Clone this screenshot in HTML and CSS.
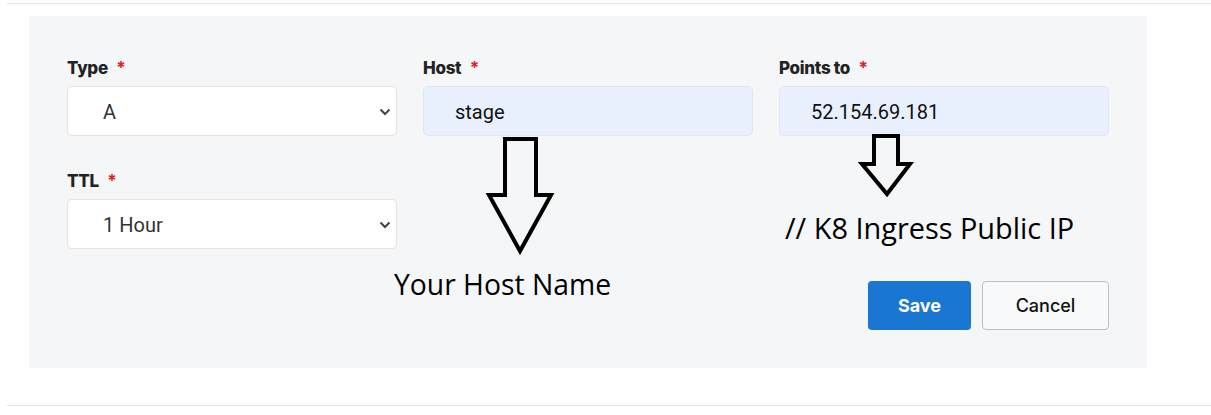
FILE: index.html
```html
<!DOCTYPE html>
<html>
<head>
<meta charset="utf-8">
<link rel="stylesheet" href="styles.css">
</head>
<body>
<div class="rule rule-top"></div>
<div class="panel">
  <div class="grid">
    <div class="field">
      <div class="label">Type <span class="req">*</span></div>
      <div class="select"><span>A</span>
        <svg class="chev" width="12" height="8" viewBox="0 0 12 8"><path d="M1.5 1.5 L6 6 L10.5 1.5" fill="none" stroke="#444" stroke-width="2"/></svg>
      </div>
    </div>
    <div class="field">
      <div class="label">Host <span class="req">*</span></div>
      <div class="input">stage</div>
    </div>
    <div class="field">
      <div class="label">Points to <span class="req">*</span></div>
      <div class="input">52.154.69.181</div>
    </div>
    <div class="field row2">
      <div class="label">TTL <span class="req">*</span></div>
      <div class="select"><span>1 Hour</span>
        <svg class="chev" width="12" height="8" viewBox="0 0 12 8"><path d="M1.5 1.5 L6 6 L10.5 1.5" fill="none" stroke="#444" stroke-width="2"/></svg>
      </div>
    </div>
  </div>
  <div class="actions">
    <button class="btn btn-save">Save</button>
    <button class="btn btn-cancel">Cancel</button>
  </div>

  <svg class="arrow arrow-big" width="80" height="130" viewBox="480 130 80 130">
    <path d="M505 139 L536 139 L536 195 L551 195 L520 251 L489 195 L505 195 Z" fill="none" stroke="#000" stroke-width="4" stroke-linejoin="miter"/>
  </svg>
  <svg class="arrow arrow-small" width="60" height="70" viewBox="855 130 60 70">
    <path d="M874 136 L898 136 L898 164 L910 164 L887 194 L862 164 L874 164 Z" fill="none" stroke="#000" stroke-width="4" stroke-linejoin="miter"/>
  </svg>
  <div class="note note-host">Your Host Name</div>
  <div class="note note-ip">// K8 Ingress Public IP</div>
</div>
<div class="rule rule-bottom"></div>
</body>
</html>
```

FILE: styles.css
```css
* { box-sizing: border-box; }
html, body { margin: 0; padding: 0; background: #fff; }
body { width: 1211px; height: 415px; overflow: hidden; font-family: Roboto, "Liberation Sans", Arial, sans-serif; }

.rule { height: 1px; background: #e3e3e3; margin-left: 7px; }
.rule-top { margin-top: 3px; }
.rule-bottom { margin-top: 37px; }

.panel {
  position: relative;
  margin: 12px 0 0 29px;
  width: 1118px;
  background: #f5f6f8;
  padding: 42px 38px 38px 38px;
}

.grid {
  display: grid;
  grid-template-columns: 330px 330px 330px;
  column-gap: 26px;
  row-gap: 35px;
}

.label {
  font-family: Inter, "Liberation Sans", sans-serif;
  font-weight: 800;
  font-size: 17px;
  line-height: 20px;
  height: 20px;
  color: #222;
  letter-spacing: -0.3px;
  margin-bottom: 8px;
}
.req { color: #e0201c; font-weight: 700; margin-left: 5px; }

.select, .input {
  height: 50px;
  border-radius: 5px;
  display: flex;
  align-items: center;
  padding-top: 2px;
  font-family: Roboto, "Liberation Sans", Arial, sans-serif;
  font-size: 20px;
}
.select {
  background: #fff;
  border: 1px solid #e3e3e3;
  padding-left: 35px;
  padding-right: 5px;
  justify-content: space-between;
  color: #333;
}
.input {
  background: #e8f0fe;
  border: 1px solid #e2e6ec;
  color: #111;
  padding-left: 31px;
}

.actions {
  display: flex;
  justify-content: flex-end;
  gap: 11px;
  margin-top: 32px;
}
.btn {
  height: 49px;
  border-radius: 4px;
  font-family: Inter, "Liberation Sans", sans-serif;
  font-size: 18px;
  cursor: pointer;
}
.btn-save {
  width: 103px;
  background: #1976d2;
  color: #fff;
  border: none;
  font-weight: 700;
}
.btn-cancel {
  width: 127px;
  background: #f8f9fa;
  color: #111;
  border: 1px solid #bcc1c8;
  font-weight: 500;
}

.arrow { position: absolute; }
.arrow-big { left: 451px; top: 114px; }
.arrow-small { left: 826px; top: 114px; }

.note {
  position: absolute;
  font-family: "Open Sans", "Noto Sans", sans-serif;
  line-height: 1;
  color: #000;
  white-space: nowrap;
}
.note-host { left: 365px; top: 254px; font-size: 28.3px; }
.note-ip { left: 756px; top: 198px; font-size: 28.9px; }
```
